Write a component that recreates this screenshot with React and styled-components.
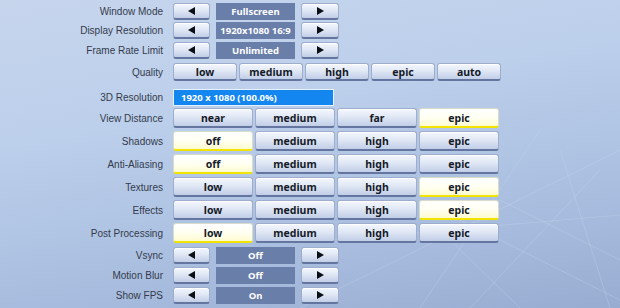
import React from "react";
import styled, { createGlobalStyle, css } from "styled-components";

const Global = createGlobalStyle`
  html, body { margin: 0; padding: 0; }
  body {
    width: 620px;
    height: 308px;
    overflow: hidden;
    font-family: "Noto Sans", "DejaVu Sans", sans-serif;
  }
`;

const Page = styled.div`
  position: relative;
  width: 620px;
  height: 308px;
  overflow: hidden;
  background: linear-gradient(170deg, #c6d5ec 0%, #bccfeb 35%, #aabfe0 70%, #98acd1 100%);
`;

const Backdrop = styled.svg`
  position: absolute;
  inset: 0;
  pointer-events: none;
`;

const Panel = styled.div`
  position: relative;
  display: flex;
  flex-direction: column;
  padding-top: 3px;
`;

const Row = styled.div`
  display: grid;
  grid-template-columns: 163px auto;
  column-gap: 10px;
  align-items: center;
  height: ${(p) => p.$h}px;
  margin-top: ${(p) => p.$mt || 0}px;
`;

const Label = styled.div`
  text-align: right;
  font-family: "Liberation Sans", Arial, sans-serif;
  font-size: 10px;
  color: #343b4c;
  white-space: nowrap;
`;

const Controls = styled.div`
  display: flex;
  align-items: stretch;
  height: 100%;
  gap: ${(p) => p.$gap}px;
`;

const buttonBase = css`
  box-sizing: border-box;
  display: flex;
  align-items: center;
  justify-content: center;
  border-radius: 3px;
  font-weight: 700;
  font-size: 10.5px;
  color: #151a28;
  border: 1px solid #9eadcb;
  border-bottom: 2px solid #64769f;
  background: linear-gradient(#f4f7fd 0%, #e1e8f5 45%, #c1cee7 100%);
  box-shadow: inset 0 1px 0 #ffffff;
`;

const Choice = styled.div`
  ${buttonBase}
  width: ${(p) => p.$w}px;
  ${(p) =>
    p.$on &&
    css`
      background: linear-gradient(#ffffff 0%, #fffff2 50%, #fffbcf 100%);
      border-color: #d9dcc8;
      border-bottom: 2px solid #f0e400;
    `}
`;

const ArrowButton = styled.div`
  ${buttonBase}
  width: ${(p) => p.$w}px;
`;

const ValueBox = styled.div`
  box-sizing: border-box;
  width: 79px;
  margin: 0 1px;
  display: flex;
  align-items: center;
  justify-content: center;
  background: #6a7eaa;
  color: #ffffff;
  font-weight: 700;
  font-size: 9.5px;
`;

const ResBar = styled.div`
  box-sizing: border-box;
  width: 161px;
  height: 100%;
  display: flex;
  align-items: center;
  padding-left: 7px;
  background: #1386ef;
  border: 1px solid #e8f2ff;
  color: #ffffff;
  font-weight: 700;
  font-size: 9.5px;
`;

const Tri = ({ dir }) => (
  <svg width="7" height="8" viewBox="0 0 7 8">
    {dir === "l" ? (
      <polygon points="7,0 7,8 0,4" fill="#0d0f16" />
    ) : (
      <polygon points="0,0 0,8 7,4" fill="#0d0f16" />
    )}
  </svg>
);

const ArrowRow = ({ label, value, mt }) => (
  <Row $h={17} $mt={mt}>
    <Label>{label}</Label>
    <Controls $gap={5}>
      <ArrowButton $w={37}>
        <Tri dir="l" />
      </ArrowButton>
      <ValueBox>{value}</ValueBox>
      <ArrowButton $w={38}>
        <Tri dir="r" />
      </ArrowButton>
    </Controls>
  </Row>
);

const ChoiceRow = ({ label, options, selected, mt, h = 20, w = 80, gap = 2 }) => (
  <Row $h={h} $mt={mt}>
    <Label>{label}</Label>
    <Controls $gap={gap}>
      {options.map((o, i) => (
        <Choice key={i} $w={w} $on={i === selected}>
          {o}
        </Choice>
      ))}
    </Controls>
  </Row>
);

const lines = [
  [300, 308, 620, 150],
  [380, 180, 620, 300],
  [420, 308, 540, 130],
  [500, 200, 620, 260],
  [330, 240, 620, 215],
  [560, 150, 610, 308],
  [440, 230, 520, 308],
  [600, 170, 470, 308],
];

export default function App() {
  const vd = ["near", "medium", "far", "epic"];
  const lvl = ["low", "medium", "high", "epic"];
  const sh = ["off", "medium", "high", "epic"];
  return (
    <Page>
      <Global />
      <Backdrop width="620" height="308" viewBox="0 0 620 308">
        {lines.map(([x1, y1, x2, y2], i) => (
          <line
            key={i}
            x1={x1}
            y1={y1}
            x2={x2}
            y2={y2}
            stroke="#c8d6ef"
            strokeOpacity="0.4"
            strokeWidth="0.8"
          />
        ))}
      </Backdrop>
      <Panel>
        <ArrowRow label="Window Mode" value="Fullscreen" />
        <ArrowRow label="Display Resolution" value="1920x1080 16:9" mt={2} />
        <ArrowRow label="Frame Rate Limit" value="Unlimited" mt={3} />
        <ChoiceRow
          label="Quality"
          options={["low", "medium", "high", "epic", "auto"]}
          selected={-1}
          mt={4}
          h={18}
          w={64}
          gap={2}
        />
        <Row $h={17} $mt={8}>
          <Label>3D Resolution</Label>
          <Controls $gap={0}>
            <ResBar>1920 x 1080 (100.0%)</ResBar>
          </Controls>
        </Row>
        <ChoiceRow label="View Distance" options={vd} selected={3} mt={2} />
        <ChoiceRow label="Shadows" options={sh} selected={0} mt={3} />
        <ChoiceRow label="Anti-Aliasing" options={sh} selected={0} mt={3} />
        <ChoiceRow label="Textures" options={lvl} selected={3} mt={3} />
        <ChoiceRow label="Effects" options={lvl} selected={3} mt={3} />
        <ChoiceRow label="Post Processing" options={lvl} selected={0} mt={3} />
        <ArrowRow label="Vsync" value="Off" mt={4} />
        <ArrowRow label="Motion Blur" value="Off" mt={3} />
        <ArrowRow label="Show FPS" value="On" mt={3} />
      </Panel>
    </Page>
  );
}
